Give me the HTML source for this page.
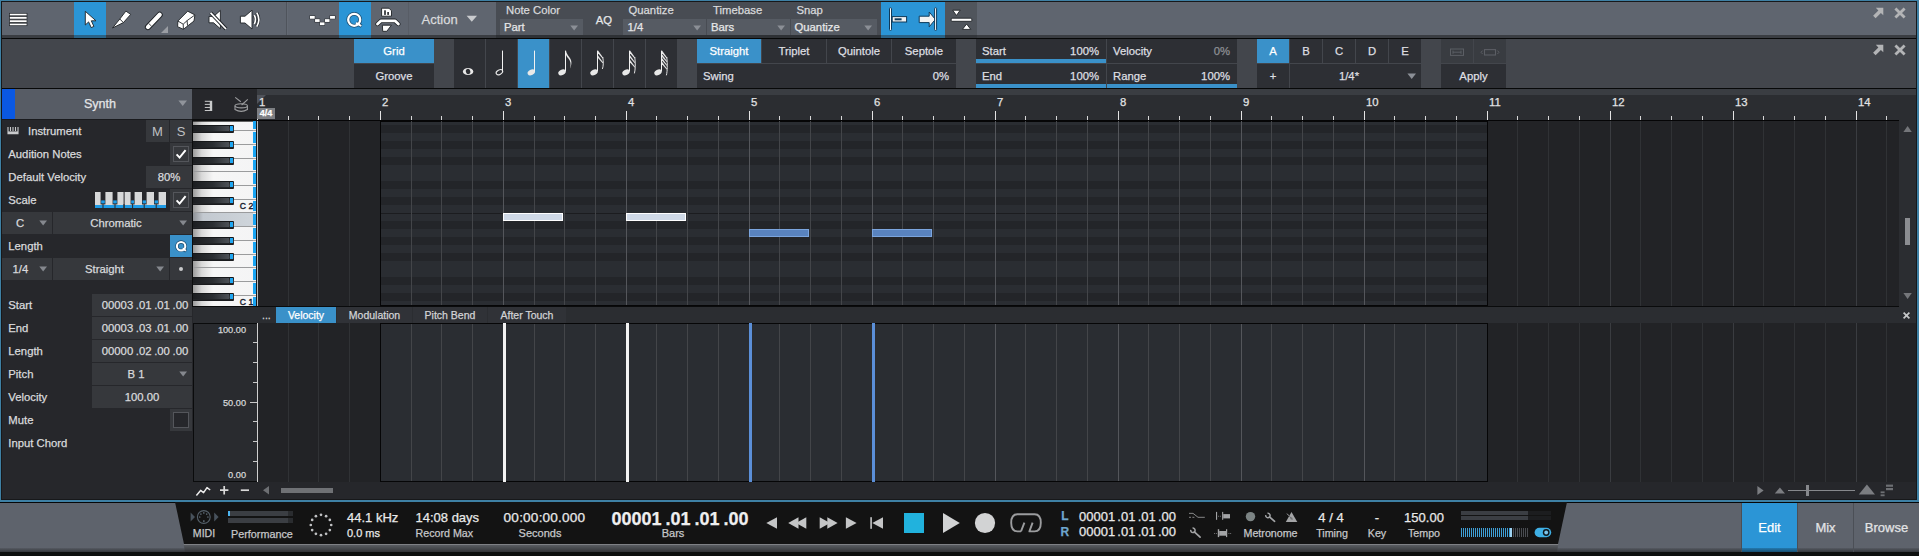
<!DOCTYPE html>
<html><head><meta charset="utf-8"><title>Studio One Editor</title>
<style>
html,body{margin:0;padding:0;background:#111;}
body{width:1919px;height:556px;overflow:hidden;position:relative;font-family:"Liberation Sans",sans-serif;}
#root{position:absolute;left:0;top:0;width:1919px;height:556px;overflow:hidden;background:#0e100f;}
#root div,#root svg{position:absolute;box-sizing:border-box;}
.t{white-space:nowrap;-webkit-text-stroke:0.25px currentColor;}
</style></head><body><div id="root">
<div style="left:0px;top:0px;width:1919px;height:502px;background:#3e80a4;"></div>
<div style="left:1px;top:1px;width:1916px;height:499px;background:#17181a;"></div>
<div style="left:2px;top:2px;width:1914px;height:33px;background:#5f656f;"></div>
<div style="left:2px;top:35px;width:1914px;height:3px;background:#3a3d42;"></div>
<div style="left:2px;top:38px;width:1914px;height:1px;background:#070808;"></div>
<div style="left:496px;top:2px;width:481px;height:33px;background:#484c53;"></div>
<div style="left:496px;top:35px;width:481px;height:3px;background:#2e3135;"></div>
<div style="left:286px;top:2px;width:1px;height:33px;background:#4f545c;"></div>
<div style="left:287px;top:2px;width:1px;height:33px;background:#646a74;"></div>
<div style="left:408px;top:2px;width:1px;height:33px;background:#585d66;"></div>
<div style="left:74px;top:2px;width:32px;height:33px;background:#2b95d6;"></div>
<div style="left:74px;top:35px;width:32px;height:3px;background:#2a6387;"></div>
<div style="left:339px;top:2px;width:32px;height:33px;background:#2b95d6;"></div>
<div style="left:339px;top:35px;width:32px;height:3px;background:#2a6387;"></div>
<div style="left:881px;top:2px;width:64px;height:33px;background:#2b95d6;"></div>
<div style="left:881px;top:35px;width:64px;height:3px;background:#2a6387;"></div>
<div style="left:945px;top:2px;width:32px;height:33px;background:#50555c;"></div>
<div style="left:945px;top:35px;width:32px;height:3px;background:#33363b;"></div>
<svg style="left:8px;top:11px;" width="22" height="17" viewBox="0 0 22 17"><rect x="1.5" y="2.3" width="17.5" height="2.5" fill="#fff" stroke="#24272b" stroke-width="0.7"/><rect x="1.5" y="5.6" width="17.5" height="2.5" fill="#fff" stroke="#24272b" stroke-width="0.7"/><rect x="1.5" y="8.899999999999999" width="17.5" height="2.5" fill="#fff" stroke="#24272b" stroke-width="0.7"/><rect x="1.5" y="12.2" width="17.5" height="2.5" fill="#fff" stroke="#24272b" stroke-width="0.7"/></svg>
<svg style="left:74px;top:2px;" width="32" height="35" viewBox="0 0 32 35"><path d="M11.3 9.3 L11.3 23 L14.6 19.9 L17.2 25.6 L19.9 24.4 L17.3 18.8 L22 18.8 Z" fill="#fff" stroke="#1e2226" stroke-width="0.9" stroke-linejoin="round"/></svg>
<svg style="left:106px;top:2px;" width="32" height="35" viewBox="0 0 32 35"><path d="M6.5 26 L13.8 17 L19.9 9.1 L24.7 12.4 L17.4 20.6 Z" fill="#fff" stroke="#1e2226" stroke-width="0.9" stroke-linejoin="round"/><path d="M13.8 17 L17.4 20.6" stroke="#1e2226" stroke-width="0.9"/></svg>
<svg style="left:138px;top:2px;" width="32" height="35" viewBox="0 0 32 35"><path d="M9.9 25.1 L21.7 12.8" stroke="#1e2226" stroke-width="6" stroke-linecap="round"/><path d="M9.9 25.1 L21.7 12.8" stroke="#fff" stroke-width="4.2" stroke-linecap="round"/><path d="M10.6 21.4 L13.6 24.2" stroke="#1e2226" stroke-width="0.8"/><path d="M30 24 L30 31 L23 31 Z" fill="#9a9da3"/></svg>
<svg style="left:170px;top:2px;" width="32" height="35" viewBox="0 0 32 35"><path d="M17.7 9.2 L24.9 12.9 L24 19 L13.4 27.3 L7.6 24.7 L7.9 19 Z" fill="#fff" stroke="#1e2226" stroke-width="0.9" stroke-linejoin="round"/><path d="M7.9 19 L13.2 22.2 L17.1 18.6 L24.6 13.2 M17.1 18.6 L17.5 23.6 M13.2 22.2 L13.4 27" fill="none" stroke="#1e2226" stroke-width="0.9"/></svg>
<svg style="left:202px;top:2px;" width="32" height="35" viewBox="0 0 32 35"><path d="M7 14.4 L11.6 14.4 L18.4 8.4 L18.4 26.8 L11.6 20.8 L7 20.8 Z" fill="#fff" stroke="#1e2226" stroke-width="0.9" stroke-linejoin="round"/><path d="M8.6 10.8 L24 27" stroke="#1e2226" stroke-width="3.6"/><path d="M8.6 10.8 L24 27" stroke="#fff" stroke-width="1.8"/></svg>
<svg style="left:234px;top:2px;" width="32" height="35" viewBox="0 0 32 35"><path d="M6.4 14.2 L11 14.2 L18 8.2 L18 27 L11 21 L6.4 21 Z" fill="#fff" stroke="#1e2226" stroke-width="0.9" stroke-linejoin="round"/><path d="M20.3 13.2 Q22.6 17.6 20.3 22" fill="none" stroke="#1e2226" stroke-width="3"/><path d="M22.8 10.6 Q26.8 17.6 22.8 24.6" fill="none" stroke="#1e2226" stroke-width="3"/><path d="M20.3 13.2 Q22.6 17.6 20.3 22" fill="none" stroke="#fff" stroke-width="1.7"/><path d="M22.8 10.6 Q26.8 17.6 22.8 24.6" fill="none" stroke="#fff" stroke-width="1.7"/></svg>
<svg style="left:308px;top:14px;" width="30" height="14" viewBox="0 0 30 14"><rect x="1.5" y="1.5" width="5.7" height="3.7" fill="#1e2226"/><rect x="6.6" y="4.7" width="5.5" height="3.7" fill="#1e2226"/><rect x="11.5" y="7.9" width="5.5" height="3.7" fill="#1e2226"/><rect x="16.5" y="4.7" width="5.5" height="3.7" fill="#1e2226"/><rect x="21.6" y="1.5" width="5.8" height="3.7" fill="#1e2226"/><rect x="1.95" y="1.95" width="4.8" height="2.8" fill="#fff"/><rect x="7.05" y="5.15" width="4.6" height="2.8" fill="#fff"/><rect x="11.95" y="8.35" width="4.6" height="2.8" fill="#fff"/><rect x="16.95" y="5.15" width="4.6" height="2.8" fill="#fff"/><rect x="22.05" y="1.95" width="4.8999999999999995" height="2.8" fill="#fff"/></svg>
<svg style="left:339px;top:2px;" width="32" height="35" viewBox="0 0 32 35"><circle cx="15.2" cy="17.8" r="6" fill="none" stroke="#1b4d70" stroke-width="3.7"/><path d="M17.1 20.8 L22.6 24.2" stroke="#1b4d70" stroke-width="3.4"/><circle cx="15.2" cy="17.8" r="6" fill="none" stroke="#fff" stroke-width="2.3"/><path d="M17.1 20.8 L22.2 24" stroke="#fff" stroke-width="2"/></svg>
<svg style="left:371px;top:2px;" width="34" height="35" viewBox="0 0 34 35"><path d="M10.6 6.2 L18 6.2 L20.5 8.8 L20.5 14.2 L10.6 14.2 Z" fill="#fff" stroke="#1e2226" stroke-width="0.9" stroke-linejoin="round"/><rect x="13.2" y="8.3" width="1.6" height="4.6" fill="#1e2226"/><rect x="16.3" y="10" width="1.6" height="2.9" fill="#1e2226"/><path d="M6.5 22 L10 18.8 L24 18.8 L27.4 22" fill="none" stroke="#1e2226" stroke-width="4.4" stroke-linejoin="round" stroke-linecap="round"/><path d="M6.5 22 L10 18.8 L24 18.8 L27.4 22" fill="none" stroke="#fff" stroke-width="2.8" stroke-linejoin="round" stroke-linecap="round"/><path d="M11.4 23.2 L20.4 23.2 L15.8 29.3 L11.7 29.3 Z" fill="#fff" stroke="#1e2226" stroke-width="0.9" stroke-linejoin="round"/></svg>
<div class="t" style="left:421.5px;top:11px;line-height:17px;height:17px;font-size:13px;color:#d9dadc;">Action</div>
<svg style="left:466px;top:15px;" width="12" height="8" viewBox="0 0 12 8"><path d="M0.6 0.8 L11 0.8 L5.8 6.8 Z" fill="#c9cbce"/></svg>
<div style="left:500px;top:19px;width:83px;height:16px;background:#565b63;"></div>
<div class="t" style="left:506px;top:3px;line-height:14px;height:14px;font-size:11.3px;color:#d9dadc;">Note Color</div>
<div class="t" style="left:504px;top:20px;line-height:14px;height:14px;font-size:11.3px;color:#e6e7e8;">Part</div>
<svg style="left:570px;top:24.5px;" width="9" height="6" viewBox="0 0 9 6"><path d="M0.3 0.5 L8 0.5 L4.15 5.4 Z" fill="#8b8f96"/></svg>
<div style="left:623px;top:19px;width:83px;height:16px;background:#565b63;"></div>
<div class="t" style="left:628.5px;top:3px;line-height:14px;height:14px;font-size:11.3px;color:#d9dadc;">Quantize</div>
<div class="t" style="left:627.5px;top:20px;line-height:14px;height:14px;font-size:11.3px;color:#e6e7e8;">1/4</div>
<svg style="left:692.8px;top:24.5px;" width="9" height="6" viewBox="0 0 9 6"><path d="M0.3 0.5 L8 0.5 L4.15 5.4 Z" fill="#8b8f96"/></svg>
<div style="left:707px;top:19px;width:83px;height:16px;background:#565b63;"></div>
<div class="t" style="left:713px;top:3px;line-height:14px;height:14px;font-size:11.3px;color:#d9dadc;">Timebase</div>
<div class="t" style="left:711px;top:20px;line-height:14px;height:14px;font-size:11.3px;color:#e6e7e8;">Bars</div>
<svg style="left:777px;top:24.5px;" width="9" height="6" viewBox="0 0 9 6"><path d="M0.3 0.5 L8 0.5 L4.15 5.4 Z" fill="#8b8f96"/></svg>
<div style="left:791px;top:19px;width:86px;height:16px;background:#565b63;"></div>
<div class="t" style="left:796.5px;top:3px;line-height:14px;height:14px;font-size:11.3px;color:#d9dadc;">Snap</div>
<div class="t" style="left:794.5px;top:20px;line-height:14px;height:14px;font-size:11.3px;color:#e6e7e8;">Quantize</div>
<svg style="left:864px;top:24.5px;" width="9" height="6" viewBox="0 0 9 6"><path d="M0.3 0.5 L8 0.5 L4.15 5.4 Z" fill="#8b8f96"/></svg>
<div class="t" style="left:595px;top:13px;line-height:14px;height:14px;font-size:11.3px;color:#e6e7e8;width:18px;text-align:center;">AQ</div>
<svg style="left:881px;top:2px;" width="64" height="35" viewBox="0 0 64 35"><rect x="8.5" y="5.8" width="2" height="22.6" rx="0.8" fill="#fff" stroke="#0f3a5a" stroke-width="1"/><rect x="11.2" y="14.6" width="14.4" height="5.4" fill="#f2f2f2" stroke="#0f3a5a" stroke-width="1"/><rect x="13.6" y="16.3" width="7" height="2" fill="#0f3a5a"/><path d="M38.2 14.2 L48.2 14.2 L48.2 10 L54.4 17.4 L48.2 24.8 L48.2 20.6 L38.2 20.6 Z" fill="#f2f2f2" stroke="#0f3a5a" stroke-width="1"/><rect x="53.6" y="5.8" width="2" height="22.6" rx="0.8" fill="#fff" stroke="#0f3a5a" stroke-width="1"/></svg>
<svg style="left:945px;top:2px;" width="32" height="35" viewBox="0 0 32 35"><rect x="6.2" y="16.2" width="20.6" height="3.1" rx="0.8" fill="#fff" stroke="#1e2226" stroke-width="0.9" stroke-linejoin="round"/><path d="M7.7 8.2 L15.2 8.2 L11.45 13.5 Z" fill="#fff" stroke="#1e2226" stroke-width="0.9" stroke-linejoin="round"/><path d="M17.4 27.4 L25.8 27.4 L21.6 22 Z" fill="#fff" stroke="#1e2226" stroke-width="0.9" stroke-linejoin="round"/></svg>
<svg style="left:1872px;top:6px;" width="14" height="14" viewBox="0 0 14 14"><path d="M3.8 1.8 L11.3 1.8 L11.3 9.3 L8.9 6.9 L3.6 12.2 L1.1 9.7 L6.4 4.4 Z" fill="#b3b4b6"/></svg>
<svg style="left:1893px;top:6px;" width="14" height="14" viewBox="0 0 14 14"><path d="M2.4 2.4 L11.6 11.6 M11.6 2.4 L2.4 11.6" stroke="#b3b4b6" stroke-width="2.8"/></svg>
<div style="left:2px;top:39px;width:1914px;height:49px;background:#43464c;"></div>
<div style="left:2px;top:88px;width:1914px;height:1px;background:#070808;"></div>
<div style="left:354px;top:39px;width:80px;height:24px;background:#3a91c9;"></div>
<div class="t" style="left:354px;top:44px;line-height:14px;height:14px;font-size:11.3px;color:#fff;width:80px;text-align:center;">Grid</div>
<div style="left:354px;top:64px;width:80px;height:24px;background:#2d2f34;"></div>
<div class="t" style="left:354px;top:69px;line-height:14px;height:14px;font-size:11.3px;color:#dedfe1;width:80px;text-align:center;">Groove</div>
<div style="left:454px;top:39px;width:31px;height:49px;background:#2d2f34;"></div>
<svg style="left:454px;top:39px;" width="31" height="49" viewBox="0 0 31 49"><ellipse cx="14.1" cy="32.5" rx="5.2" ry="3.6" fill="#e8e8e8"/><ellipse cx="14.1" cy="32.5" rx="2.2" ry="2.7" transform="rotate(-18 14.1 32.5)" fill="#2d2f34"/></svg>
<div style="left:486px;top:39px;width:31px;height:49px;background:#2d2f34;"></div>
<svg style="left:486px;top:39px;" width="31" height="49" viewBox="0 0 31 49"><ellipse cx="13.4" cy="33.2" rx="3.5" ry="2.2" transform="rotate(-28 13.4 33.2)" fill="none" stroke="#e8e8e8" stroke-width="1.1"/><rect x="16" y="11.6" width="1" height="20.6" fill="#f2f2f2"/></svg>
<div style="left:518px;top:39px;width:31px;height:49px;background:#3a91c9;"></div>
<svg style="left:518px;top:39px;" width="31" height="49" viewBox="0 0 31 49"><ellipse cx="13.3" cy="33.4" rx="3.9" ry="2.7" transform="rotate(-28 13.3 33.4)" fill="#e8e8e8"/><rect x="16" y="11.6" width="1" height="20.799999999999997" fill="#f2f2f2"/></svg>
<div style="left:550px;top:39px;width:31px;height:49px;background:#2d2f34;"></div>
<svg style="left:550px;top:39px;" width="31" height="49" viewBox="0 0 31 49"><ellipse cx="12" cy="33.4" rx="3.9" ry="2.7" transform="rotate(-28 12 33.4)" fill="#e8e8e8"/><rect x="15" y="11.6" width="1" height="20.799999999999997" fill="#f2f2f2"/><path d="M16 11.6 C16.6 16.8 21.2 18.6 21.4 23.2 C21.5 25.6 20.8 27.6 20 29.6 C20.4 27.2 20.8 25.2 20.4 23.4 C19.8 20.2 17.2 19.0 16 16.0 Z" fill="#e8e8e8"/></svg>
<div style="left:582px;top:39px;width:31px;height:49px;background:#2d2f34;"></div>
<svg style="left:582px;top:39px;" width="31" height="49" viewBox="0 0 31 49"><ellipse cx="12" cy="33.4" rx="3.9" ry="2.7" transform="rotate(-28 12 33.4)" fill="#e8e8e8"/><rect x="15" y="11.6" width="1" height="20.799999999999997" fill="#f2f2f2"/><path d="M16 11.6 L21.2 18.8 L20.6 19.4 L16 14.2 Z" fill="#e8e8e8"/><path d="M16 16.4 L21.2 23.599999999999998 L20.6 24.2 L16 19.0 Z" fill="#e8e8e8"/><path d="M20.8 18.0 C21.6 23.4 21.4 27.0 20.4 30.0" fill="none" stroke="#e8e8e8" stroke-width="0.95"/></svg>
<div style="left:614px;top:39px;width:31px;height:49px;background:#2d2f34;"></div>
<svg style="left:614px;top:39px;" width="31" height="49" viewBox="0 0 31 49"><ellipse cx="12" cy="33.4" rx="3.9" ry="2.7" transform="rotate(-28 12 33.4)" fill="#e8e8e8"/><rect x="15" y="11.6" width="1" height="20.799999999999997" fill="#f2f2f2"/><path d="M16 11.6 L21.2 18.8 L20.6 19.4 L16 14.2 Z" fill="#e8e8e8"/><path d="M16 16.2 L21.2 23.4 L20.6 24.0 L16 18.8 Z" fill="#e8e8e8"/><path d="M16 20.799999999999997 L21.2 27.999999999999996 L20.6 28.599999999999998 L16 23.4 Z" fill="#e8e8e8"/><path d="M20.8 18.0 C21.6 25.38 21.4 30.299999999999997 20.4 34.4" fill="none" stroke="#e8e8e8" stroke-width="0.95"/></svg>
<div style="left:646px;top:39px;width:31px;height:49px;background:#2d2f34;"></div>
<svg style="left:646px;top:39px;" width="31" height="49" viewBox="0 0 31 49"><ellipse cx="12" cy="33.4" rx="3.9" ry="2.7" transform="rotate(-28 12 33.4)" fill="#e8e8e8"/><rect x="15" y="11.6" width="1" height="20.799999999999997" fill="#f2f2f2"/><path d="M16 11.6 L21.2 18.8 L20.6 19.4 L16 14.2 Z" fill="#e8e8e8"/><path d="M16 15.3 L21.2 22.5 L20.6 23.1 L16 17.900000000000002 Z" fill="#e8e8e8"/><path d="M16 19.0 L21.2 26.2 L20.6 26.8 L16 21.6 Z" fill="#e8e8e8"/><path d="M16 22.700000000000003 L21.2 29.900000000000002 L20.6 30.500000000000004 L16 25.300000000000004 Z" fill="#e8e8e8"/><path d="M20.8 18.0 C21.6 26.235000000000003 21.4 31.725 20.4 36.300000000000004" fill="none" stroke="#e8e8e8" stroke-width="0.95"/></svg>
<div style="left:697px;top:39px;width:64px;height:24px;background:#3a91c9;"></div>
<div class="t" style="left:697px;top:44px;line-height:14px;height:14px;font-size:11.3px;color:#fff;width:64px;text-align:center;">Straight</div>
<div style="left:762px;top:39px;width:64px;height:24px;background:#2d2f34;"></div>
<div class="t" style="left:762px;top:44px;line-height:14px;height:14px;font-size:11.3px;color:#dedfe1;width:64px;text-align:center;">Triplet</div>
<div style="left:827px;top:39px;width:64px;height:24px;background:#2d2f34;"></div>
<div class="t" style="left:827px;top:44px;line-height:14px;height:14px;font-size:11.3px;color:#dedfe1;width:64px;text-align:center;">Quintole</div>
<div style="left:892px;top:39px;width:64px;height:24px;background:#2d2f34;"></div>
<div class="t" style="left:892px;top:44px;line-height:14px;height:14px;font-size:11.3px;color:#dedfe1;width:64px;text-align:center;">Septole</div>
<div style="left:697px;top:64px;width:259px;height:24px;background:#2d2f34;"></div>
<div class="t" style="left:703px;top:69px;line-height:14px;height:14px;font-size:11.3px;color:#dedfe1;">Swing</div>
<div class="t" style="left:880px;top:69px;line-height:14px;height:14px;font-size:11.3px;color:#dedfe1;width:69px;text-align:right;">0%</div>
<div style="left:976px;top:39px;width:130px;height:24px;background:#2d2f34;"></div>
<div style="left:976px;top:59px;width:130px;height:4px;background:#3a91c9;"></div>
<div class="t" style="left:982px;top:44px;line-height:14px;height:14px;font-size:11.3px;color:#dedfe1;">Start</div>
<div class="t" style="left:1026px;top:44px;line-height:14px;height:14px;font-size:11.3px;color:#dedfe1;width:73px;text-align:right;">100%</div>
<div style="left:976px;top:64px;width:130px;height:24px;background:#2d2f34;"></div>
<div style="left:976px;top:84px;width:130px;height:4px;background:#3a91c9;"></div>
<div class="t" style="left:982px;top:69px;line-height:14px;height:14px;font-size:11.3px;color:#dedfe1;">End</div>
<div class="t" style="left:1026px;top:69px;line-height:14px;height:14px;font-size:11.3px;color:#dedfe1;width:73px;text-align:right;">100%</div>
<div style="left:1107px;top:39px;width:130px;height:24px;background:#2d2f34;"></div>
<div class="t" style="left:1113px;top:44px;line-height:14px;height:14px;font-size:11.3px;color:#dedfe1;">Velocity</div>
<div class="t" style="left:1157px;top:44px;line-height:14px;height:14px;font-size:11.3px;color:#8e9095;width:73px;text-align:right;">0%</div>
<div style="left:1107px;top:64px;width:130px;height:24px;background:#2d2f34;"></div>
<div style="left:1107px;top:84px;width:130px;height:4px;background:#3a91c9;"></div>
<div class="t" style="left:1113px;top:69px;line-height:14px;height:14px;font-size:11.3px;color:#dedfe1;">Range</div>
<div class="t" style="left:1157px;top:69px;line-height:14px;height:14px;font-size:11.3px;color:#dedfe1;width:73px;text-align:right;">100%</div>
<div style="left:1257px;top:39px;width:32px;height:24px;background:#3a91c9;"></div>
<div class="t" style="left:1257px;top:44px;line-height:14px;height:14px;font-size:11.3px;color:#fff;width:32px;text-align:center;">A</div>
<div style="left:1290px;top:39px;width:32px;height:24px;background:#2d2f34;"></div>
<div class="t" style="left:1290px;top:44px;line-height:14px;height:14px;font-size:11.3px;color:#dedfe1;width:32px;text-align:center;">B</div>
<div style="left:1323px;top:39px;width:32px;height:24px;background:#2d2f34;"></div>
<div class="t" style="left:1323px;top:44px;line-height:14px;height:14px;font-size:11.3px;color:#dedfe1;width:32px;text-align:center;">C</div>
<div style="left:1356px;top:39px;width:32px;height:24px;background:#2d2f34;"></div>
<div class="t" style="left:1356px;top:44px;line-height:14px;height:14px;font-size:11.3px;color:#dedfe1;width:32px;text-align:center;">D</div>
<div style="left:1389px;top:39px;width:32px;height:24px;background:#2d2f34;"></div>
<div class="t" style="left:1389px;top:44px;line-height:14px;height:14px;font-size:11.3px;color:#dedfe1;width:32px;text-align:center;">E</div>
<div style="left:1257px;top:64px;width:32px;height:24px;background:#2d2f34;"></div>
<div class="t" style="left:1257px;top:69px;line-height:14px;height:14px;font-size:11.3px;color:#dedfe1;width:32px;text-align:center;">+</div>
<div style="left:1290px;top:64px;width:131px;height:24px;background:#2d2f34;"></div>
<div class="t" style="left:1290px;top:69px;line-height:14px;height:14px;font-size:11.3px;color:#dedfe1;width:118px;text-align:center;">1/4*</div>
<svg style="left:1407px;top:73px;" width="10" height="7" viewBox="0 0 10 7"><path d="M0.4 0.6 L9 0.6 L4.7 6 Z" fill="#8b8f96"/></svg>
<div style="left:1441px;top:39px;width:32px;height:24px;background:#393c41;"></div>
<div style="left:1474px;top:39px;width:32px;height:24px;background:#393c41;"></div>
<svg style="left:1441px;top:40px;" width="32" height="24" viewBox="0 0 32 24"><rect x="9.5" y="9" width="13" height="6.4" fill="none" stroke="#5b5e64" stroke-width="1"/><path d="M12 12.2 L20 12.2 M12 10.6 L12 13.8 M20 10.6 L20 13.8" stroke="#5b5e64" stroke-width="1"/></svg>
<svg style="left:1474px;top:40px;" width="32" height="24" viewBox="0 0 32 24"><rect x="10.5" y="9.6" width="11" height="5.4" fill="none" stroke="#5b5e64" stroke-width="1.1"/><path d="M8.6 10.6 L7 12.3 L8.6 14 M23.4 10.6 L25 12.3 L23.4 14" fill="none" stroke="#5b5e64" stroke-width="1"/></svg>
<div style="left:1441px;top:64px;width:65px;height:24px;background:#2d2f34;"></div>
<div class="t" style="left:1441px;top:69px;line-height:14px;height:14px;font-size:11.3px;color:#dedfe1;width:65px;text-align:center;">Apply</div>
<svg style="left:1872px;top:43px;" width="14" height="14" viewBox="0 0 14 14"><path d="M3.8 1.8 L11.3 1.8 L11.3 9.3 L8.9 6.9 L3.6 12.2 L1.1 9.7 L6.4 4.4 Z" fill="#b3b4b6"/></svg>
<svg style="left:1893px;top:43px;" width="14" height="14" viewBox="0 0 14 14"><path d="M2.4 2.4 L11.6 11.6 M11.6 2.4 L2.4 11.6" stroke="#b3b4b6" stroke-width="2.8"/></svg>
<div style="left:2px;top:89px;width:191px;height:410px;background:#26272b;"></div>
<div style="left:2px;top:89px;width:13px;height:30px;background:#0a58e2;"></div>
<div style="left:15px;top:89px;width:177px;height:30px;background:#575c65;"></div>
<div class="t" style="left:15px;top:96px;line-height:16px;height:16px;font-size:12.6px;color:#e4e5e7;width:170px;text-align:center;">Synth</div>
<svg style="left:178px;top:100px;" width="10" height="7" viewBox="0 0 10 7"><path d="M0.4 0.6 L9 0.6 L4.7 6 Z" fill="#90949b"/></svg>
<div style="left:2px;top:119px;width:191px;height:1px;background:#1a1b1e;"></div>
<svg style="left:7px;top:126px;" width="12" height="9" viewBox="0 0 12 9"><path d="M1 1 L1 7.6 L11 7.6 L11 1 M3.5 1 L3.5 5 M6 1 L6 5 M8.5 1 L8.5 5" fill="none" stroke="#c9cacc" stroke-width="1.1"/><rect x="1" y="5.4" width="10" height="2.2" fill="#c9cacc"/></svg>
<div class="t" style="left:28px;top:124px;line-height:14px;height:14px;font-size:11.3px;color:#d9dadc;">Instrument</div>
<div style="left:146px;top:120px;width:23px;height:22px;background:#36383c;"></div>
<div class="t" style="left:146px;top:123px;line-height:17px;height:17px;font-size:13px;color:#bfc0c2;width:23px;text-align:center;-webkit-text-stroke:0;">M</div>
<div style="left:170px;top:120px;width:22px;height:22px;background:#36383c;"></div>
<div class="t" style="left:170px;top:123px;line-height:17px;height:17px;font-size:13px;color:#bfc0c2;width:22px;text-align:center;-webkit-text-stroke:0;">S</div>
<div class="t" style="left:8.3px;top:147px;line-height:14px;height:14px;font-size:11.3px;color:#d9dadc;">Audition Notes</div>
<div style="left:170px;top:143px;width:22px;height:22px;background:#36383c;"></div>
<div style="left:173px;top:146px;width:16px;height:16px;border:1px solid #54565b;"></div>
<svg style="left:173px;top:146px;" width="16" height="16" viewBox="0 0 16 16"><path d="M3.6 8.4 L6.6 11.6 L12.6 4.2" fill="none" stroke="#fff" stroke-width="2"/></svg>
<div class="t" style="left:8.3px;top:170px;line-height:14px;height:14px;font-size:11.3px;color:#d9dadc;">Default Velocity</div>
<div style="left:146px;top:166px;width:46px;height:22px;background:#36383c;"></div>
<div class="t" style="left:146px;top:170px;line-height:14px;height:14px;font-size:11.3px;color:#d9dadc;width:46px;text-align:center;">80%</div>
<div class="t" style="left:8.3px;top:193px;line-height:14px;height:14px;font-size:11.3px;color:#d9dadc;">Scale</div>
<div style="left:170px;top:189px;width:22px;height:22px;background:#36383c;"></div>
<div style="left:173px;top:192px;width:16px;height:16px;border:1px solid #54565b;"></div>
<svg style="left:173px;top:192px;" width="16" height="16" viewBox="0 0 16 16"><path d="M3.6 8.4 L6.6 11.6 L12.6 4.2" fill="none" stroke="#fff" stroke-width="2"/></svg>
<svg style="left:95px;top:192px;" width="71" height="16" viewBox="0 0 71 16"><rect x="0" y="0" width="71" height="16" fill="#d7d8d9"/><rect x="0" y="13" width="71" height="3" fill="#1e9be6"/><rect x="5.6" y="0" width="4.800000000000001" height="12.4" fill="#26272b"/><rect x="6.199999999999999" y="8.4" width="3.6000000000000005" height="3" fill="#1e9be6"/><rect x="17.6" y="0" width="4.799999999999997" height="12.4" fill="#26272b"/><rect x="18.200000000000003" y="8.4" width="3.599999999999997" height="3" fill="#1e9be6"/><rect x="35.6" y="0" width="4.0" height="12.4" fill="#26272b"/><rect x="36.2" y="8.4" width="2.8" height="3" fill="#1e9be6"/><rect x="47" y="0" width="4.600000000000001" height="12.4" fill="#26272b"/><rect x="47.6" y="8.4" width="3.4000000000000012" height="3" fill="#1e9be6"/><rect x="59" y="0" width="4.600000000000001" height="12.4" fill="#26272b"/><rect x="59.6" y="8.4" width="3.4000000000000012" height="3" fill="#1e9be6"/><rect x="7.5" y="12" width="1" height="4" fill="#26272b"/><rect x="19.5" y="12" width="1" height="4" fill="#26272b"/><rect x="28.5" y="12" width="1" height="4" fill="#26272b"/><rect x="37.1" y="12" width="1" height="4" fill="#26272b"/><rect x="48.7" y="12" width="1" height="4" fill="#26272b"/><rect x="60.7" y="12" width="1" height="4" fill="#26272b"/><rect x="28.6" y="0" width="1" height="16" fill="#26272b"/></svg>
<div style="left:2px;top:212px;width:50px;height:22px;background:#36383c;"></div>
<div class="t" style="left:13px;top:216px;line-height:14px;height:14px;font-size:11.3px;color:#d9dadc;width:14px;text-align:center;">C</div>
<svg style="left:38.5px;top:220px;" width="9" height="6" viewBox="0 0 9 6"><path d="M0.3 0.5 L8 0.5 L4.15 5.4 Z" fill="#85888e"/></svg>
<div style="left:53px;top:212px;width:139px;height:22px;background:#36383c;"></div>
<div class="t" style="left:53px;top:216px;line-height:14px;height:14px;font-size:11.3px;color:#d9dadc;width:126px;text-align:center;">Chromatic</div>
<svg style="left:178.5px;top:220px;" width="9" height="6" viewBox="0 0 9 6"><path d="M0.3 0.5 L8 0.5 L4.15 5.4 Z" fill="#85888e"/></svg>
<div class="t" style="left:8.3px;top:239px;line-height:14px;height:14px;font-size:11.3px;color:#d9dadc;">Length</div>
<div style="left:170px;top:235px;width:22px;height:22px;background:#3a91c9;"></div>
<svg style="left:170px;top:235px;" width="22" height="22" viewBox="0 0 22 22"><circle cx="11.1" cy="11.2" r="4.2" fill="none" stroke="#1b4d70" stroke-width="3.4"/><path d="M12.8 13.2 L16.2 16.2" stroke="#1b4d70" stroke-width="3.2"/><circle cx="11.1" cy="11.2" r="4.2" fill="none" stroke="#fff" stroke-width="2.1"/><path d="M12.8 13.2 L15.9 15.9" stroke="#fff" stroke-width="1.9"/></svg>
<div style="left:2px;top:258px;width:50px;height:22px;background:#36383c;"></div>
<div class="t" style="left:12.5px;top:262px;line-height:14px;height:14px;font-size:11.3px;color:#d9dadc;">1/4</div>
<svg style="left:38.5px;top:266px;" width="9" height="6" viewBox="0 0 9 6"><path d="M0.3 0.5 L8 0.5 L4.15 5.4 Z" fill="#85888e"/></svg>
<div style="left:53px;top:258px;width:116px;height:22px;background:#36383c;"></div>
<div class="t" style="left:53px;top:262px;line-height:14px;height:14px;font-size:11.3px;color:#d9dadc;width:103px;text-align:center;">Straight</div>
<svg style="left:155.5px;top:266px;" width="9" height="6" viewBox="0 0 9 6"><path d="M0.3 0.5 L8 0.5 L4.15 5.4 Z" fill="#85888e"/></svg>
<div style="left:170px;top:258px;width:22px;height:22px;background:#36383c;"></div>
<div style="left:179px;top:267px;width:4px;height:4px;background:#c9cacc;border-radius:2px;"></div>
<div class="t" style="left:8.3px;top:298px;line-height:14px;height:14px;font-size:11.3px;color:#d9dadc;">Start</div>
<div style="left:92px;top:294px;width:100px;height:22px;background:#36383c;"></div>
<div class="t" style="left:95px;top:298px;line-height:14px;height:14px;font-size:11.3px;color:#d9dadc;width:100px;text-align:center;word-spacing:-0.5px;">00003 .01 .01 .00</div>
<div class="t" style="left:8.3px;top:321px;line-height:14px;height:14px;font-size:11.3px;color:#d9dadc;">End</div>
<div style="left:92px;top:317px;width:100px;height:22px;background:#36383c;"></div>
<div class="t" style="left:95px;top:321px;line-height:14px;height:14px;font-size:11.3px;color:#d9dadc;width:100px;text-align:center;word-spacing:-0.5px;">00003 .03 .01 .00</div>
<div class="t" style="left:8.3px;top:344px;line-height:14px;height:14px;font-size:11.3px;color:#d9dadc;">Length</div>
<div style="left:92px;top:340px;width:100px;height:22px;background:#36383c;"></div>
<div class="t" style="left:95px;top:344px;line-height:14px;height:14px;font-size:11.3px;color:#d9dadc;width:100px;text-align:center;word-spacing:-0.5px;">00000 .02 .00 .00</div>
<div class="t" style="left:8.3px;top:367px;line-height:14px;height:14px;font-size:11.3px;color:#d9dadc;">Pitch</div>
<div style="left:92px;top:363px;width:100px;height:22px;background:#36383c;"></div>
<div class="t" style="left:92px;top:367px;line-height:14px;height:14px;font-size:11.3px;color:#d9dadc;width:88px;text-align:center;">B 1</div>
<svg style="left:178.5px;top:371px;" width="9" height="6" viewBox="0 0 9 6"><path d="M0.3 0.5 L8 0.5 L4.15 5.4 Z" fill="#85888e"/></svg>
<div class="t" style="left:8.3px;top:390px;line-height:14px;height:14px;font-size:11.3px;color:#d9dadc;">Velocity</div>
<div style="left:92px;top:386px;width:100px;height:22px;background:#36383c;"></div>
<div class="t" style="left:92px;top:390px;line-height:14px;height:14px;font-size:11.3px;color:#d9dadc;width:100px;text-align:center;">100.00</div>
<div class="t" style="left:8.3px;top:413px;line-height:14px;height:14px;font-size:11.3px;color:#d9dadc;">Mute</div>
<div style="left:170px;top:409px;width:22px;height:22px;background:#36383c;"></div>
<div style="left:173px;top:412px;width:16px;height:16px;background:#26272b;border:1px solid #54565b;"></div>
<div class="t" style="left:8.3px;top:436px;line-height:14px;height:14px;font-size:11.3px;color:#d9dadc;">Input Chord</div>
<div style="left:193px;top:89px;width:64px;height:30px;background:#26272b;"></div>
<svg style="left:203px;top:99px;" width="12" height="14" viewBox="0 0 12 14"><rect x="6.8" y="1.8" width="2.4" height="10.2" fill="#c9cacb"/><rect x="1.8" y="1.80" width="5.2" height="1" fill="#c9cacb"/><rect x="1.8" y="4.87" width="5.2" height="1" fill="#c9cacb"/><rect x="1.8" y="7.94" width="5.2" height="1" fill="#c9cacb"/><rect x="1.8" y="11.01" width="5.2" height="1" fill="#c9cacb"/></svg>
<svg style="left:231px;top:95px;" width="22" height="20" viewBox="0 0 22 20"><ellipse cx="10.2" cy="10.8" rx="6.2" ry="2.1" fill="none" stroke="#9b9c9e" stroke-width="1.1"/><path d="M4 10.8 L4 14.6 Q10.2 18.2 16.4 14.6 L16.4 10.8" fill="none" stroke="#9b9c9e" stroke-width="1.1"/><path d="M4.2 2.4 L9.8 6.8 M16.8 4.4 L10.6 10" stroke="#9b9c9e" stroke-width="1.1"/></svg>
<div style="left:257px;top:89px;width:1659px;height:31px;background:#2b2d31;"></div>
<div style="left:257px;top:89px;width:1659px;height:6px;background:#3a3d42;"></div>
<div style="left:193px;top:119px;width:64px;height:2px;background:#0c0d0e;"></div>
<div style="left:257px;top:120px;width:1642px;height:1px;background:#050506;"></div>
<svg style="left:257px;top:95px;" width="10" height="10" viewBox="0 0 10 10"><path d="M0 0 L9 0 L0 9 Z" fill="#50535a"/></svg>
<div style="left:257px;top:111px;width:1px;height:9px;background:#e4e4e4;"></div>
<div class="t" style="left:259px;top:95px;line-height:14px;height:14px;font-size:11.3px;color:#e2e3e4;">1</div>
<div style="left:380px;top:111px;width:1px;height:9px;background:#e4e4e4;"></div>
<div class="t" style="left:382px;top:95px;line-height:14px;height:14px;font-size:11.3px;color:#e2e3e4;">2</div>
<div style="left:503px;top:111px;width:1px;height:9px;background:#e4e4e4;"></div>
<div class="t" style="left:505px;top:95px;line-height:14px;height:14px;font-size:11.3px;color:#e2e3e4;">3</div>
<div style="left:626px;top:111px;width:1px;height:9px;background:#e4e4e4;"></div>
<div class="t" style="left:628px;top:95px;line-height:14px;height:14px;font-size:11.3px;color:#e2e3e4;">4</div>
<div style="left:749px;top:111px;width:1px;height:9px;background:#e4e4e4;"></div>
<div class="t" style="left:751px;top:95px;line-height:14px;height:14px;font-size:11.3px;color:#e2e3e4;">5</div>
<div style="left:872px;top:111px;width:1px;height:9px;background:#e4e4e4;"></div>
<div class="t" style="left:874px;top:95px;line-height:14px;height:14px;font-size:11.3px;color:#e2e3e4;">6</div>
<div style="left:995px;top:111px;width:1px;height:9px;background:#e4e4e4;"></div>
<div class="t" style="left:997px;top:95px;line-height:14px;height:14px;font-size:11.3px;color:#e2e3e4;">7</div>
<div style="left:1118px;top:111px;width:1px;height:9px;background:#e4e4e4;"></div>
<div class="t" style="left:1120px;top:95px;line-height:14px;height:14px;font-size:11.3px;color:#e2e3e4;">8</div>
<div style="left:1241px;top:111px;width:1px;height:9px;background:#e4e4e4;"></div>
<div class="t" style="left:1243px;top:95px;line-height:14px;height:14px;font-size:11.3px;color:#e2e3e4;">9</div>
<div style="left:1364px;top:111px;width:1px;height:9px;background:#e4e4e4;"></div>
<div class="t" style="left:1366px;top:95px;line-height:14px;height:14px;font-size:11.3px;color:#e2e3e4;">10</div>
<div style="left:1487px;top:111px;width:1px;height:9px;background:#e4e4e4;"></div>
<div class="t" style="left:1489px;top:95px;line-height:14px;height:14px;font-size:11.3px;color:#e2e3e4;">11</div>
<div style="left:1610px;top:111px;width:1px;height:9px;background:#e4e4e4;"></div>
<div class="t" style="left:1612px;top:95px;line-height:14px;height:14px;font-size:11.3px;color:#e2e3e4;">12</div>
<div style="left:1733px;top:111px;width:1px;height:9px;background:#e4e4e4;"></div>
<div class="t" style="left:1735px;top:95px;line-height:14px;height:14px;font-size:11.3px;color:#e2e3e4;">13</div>
<div style="left:1856px;top:111px;width:1px;height:9px;background:#e4e4e4;"></div>
<div class="t" style="left:1858px;top:95px;line-height:14px;height:14px;font-size:11.3px;color:#e2e3e4;">14</div>
<div style="left:288px;top:116px;width:1px;height:4px;background:#d8d8d8;"></div>
<div style="left:318px;top:116px;width:1px;height:4px;background:#d8d8d8;"></div>
<div style="left:349px;top:116px;width:1px;height:4px;background:#d8d8d8;"></div>
<div style="left:411px;top:116px;width:1px;height:4px;background:#d8d8d8;"></div>
<div style="left:441px;top:116px;width:1px;height:4px;background:#d8d8d8;"></div>
<div style="left:472px;top:116px;width:1px;height:4px;background:#d8d8d8;"></div>
<div style="left:534px;top:116px;width:1px;height:4px;background:#d8d8d8;"></div>
<div style="left:564px;top:116px;width:1px;height:4px;background:#d8d8d8;"></div>
<div style="left:595px;top:116px;width:1px;height:4px;background:#d8d8d8;"></div>
<div style="left:656px;top:116px;width:1px;height:4px;background:#d8d8d8;"></div>
<div style="left:687px;top:116px;width:1px;height:4px;background:#d8d8d8;"></div>
<div style="left:718px;top:116px;width:1px;height:4px;background:#d8d8d8;"></div>
<div style="left:779px;top:116px;width:1px;height:4px;background:#d8d8d8;"></div>
<div style="left:810px;top:116px;width:1px;height:4px;background:#d8d8d8;"></div>
<div style="left:841px;top:116px;width:1px;height:4px;background:#d8d8d8;"></div>
<div style="left:902px;top:116px;width:1px;height:4px;background:#d8d8d8;"></div>
<div style="left:933px;top:116px;width:1px;height:4px;background:#d8d8d8;"></div>
<div style="left:964px;top:116px;width:1px;height:4px;background:#d8d8d8;"></div>
<div style="left:1025px;top:116px;width:1px;height:4px;background:#d8d8d8;"></div>
<div style="left:1056px;top:116px;width:1px;height:4px;background:#d8d8d8;"></div>
<div style="left:1087px;top:116px;width:1px;height:4px;background:#d8d8d8;"></div>
<div style="left:1148px;top:116px;width:1px;height:4px;background:#d8d8d8;"></div>
<div style="left:1179px;top:116px;width:1px;height:4px;background:#d8d8d8;"></div>
<div style="left:1210px;top:116px;width:1px;height:4px;background:#d8d8d8;"></div>
<div style="left:1271px;top:116px;width:1px;height:4px;background:#d8d8d8;"></div>
<div style="left:1302px;top:116px;width:1px;height:4px;background:#d8d8d8;"></div>
<div style="left:1333px;top:116px;width:1px;height:4px;background:#d8d8d8;"></div>
<div style="left:1394px;top:116px;width:1px;height:4px;background:#d8d8d8;"></div>
<div style="left:1425px;top:116px;width:1px;height:4px;background:#d8d8d8;"></div>
<div style="left:1456px;top:116px;width:1px;height:4px;background:#d8d8d8;"></div>
<div style="left:1517px;top:116px;width:1px;height:4px;background:#d8d8d8;"></div>
<div style="left:1548px;top:116px;width:1px;height:4px;background:#d8d8d8;"></div>
<div style="left:1579px;top:116px;width:1px;height:4px;background:#d8d8d8;"></div>
<div style="left:1640px;top:116px;width:1px;height:4px;background:#d8d8d8;"></div>
<div style="left:1671px;top:116px;width:1px;height:4px;background:#d8d8d8;"></div>
<div style="left:1702px;top:116px;width:1px;height:4px;background:#d8d8d8;"></div>
<div style="left:1763px;top:116px;width:1px;height:4px;background:#d8d8d8;"></div>
<div style="left:1794px;top:116px;width:1px;height:4px;background:#d8d8d8;"></div>
<div style="left:1825px;top:116px;width:1px;height:4px;background:#d8d8d8;"></div>
<div style="left:1886px;top:116px;width:1px;height:4px;background:#d8d8d8;"></div>
<div style="left:257px;top:108px;width:18px;height:11px;background:#7d7f83;"></div>
<div class="t" style="left:257px;top:107px;line-height:12px;height:12px;font-size:9px;color:#fff;width:18px;text-align:center;font-weight:bold;">4/4</div>
<div style="left:257px;top:121px;width:1642px;height:185px;background:#222326;"></div>
<div style="left:1899px;top:119px;width:17px;height:188px;background:#2b2d31;"></div>
<div style="left:380px;top:121px;width:1107px;height:185px;background:#2a2d32;"></div>
<div style="left:380px;top:293px;width:1107px;height:8px;background:#232529;"></div>
<div style="left:380px;top:277px;width:1107px;height:8px;background:#232529;"></div>
<div style="left:380px;top:253px;width:1107px;height:8px;background:#232529;"></div>
<div style="left:380px;top:237px;width:1107px;height:8px;background:#232529;"></div>
<div style="left:380px;top:221px;width:1107px;height:8px;background:#232529;"></div>
<div style="left:380px;top:197px;width:1107px;height:8px;background:#232529;"></div>
<div style="left:380px;top:181px;width:1107px;height:8px;background:#232529;"></div>
<div style="left:380px;top:157px;width:1107px;height:8px;background:#232529;"></div>
<div style="left:380px;top:141px;width:1107px;height:8px;background:#232529;"></div>
<div style="left:380px;top:125px;width:1107px;height:8px;background:#232529;"></div>
<div style="left:380px;top:213px;width:1107px;height:1px;background:#1b1c1f;"></div>
<div style="left:380px;top:121px;width:1107px;height:1px;background:#060607;"></div>
<div style="left:257px;top:323px;width:1642px;height:159px;background:#222326;"></div>
<div style="left:1899px;top:323px;width:17px;height:159px;background:#222326;"></div>
<div style="left:380px;top:323px;width:1107px;height:159px;background:#2a2d32;"></div>
<div style="left:257px;top:121px;width:1px;height:185px;background:#3a3c40;"></div>
<div style="left:257px;top:323px;width:1px;height:159px;background:#3a3c40;"></div>
<div style="left:288px;top:121px;width:1px;height:185px;background:#303235;"></div>
<div style="left:288px;top:323px;width:1px;height:159px;background:#303235;"></div>
<div style="left:318px;top:121px;width:1px;height:185px;background:#303235;"></div>
<div style="left:318px;top:323px;width:1px;height:159px;background:#303235;"></div>
<div style="left:349px;top:121px;width:1px;height:185px;background:#303235;"></div>
<div style="left:349px;top:323px;width:1px;height:159px;background:#303235;"></div>
<div style="left:380px;top:121px;width:1px;height:185px;background:#3a3c40;"></div>
<div style="left:380px;top:323px;width:1px;height:159px;background:#3a3c40;"></div>
<div style="left:411px;top:121px;width:1px;height:185px;background:#434549;"></div>
<div style="left:411px;top:323px;width:1px;height:159px;background:#434549;"></div>
<div style="left:441px;top:121px;width:1px;height:185px;background:#434549;"></div>
<div style="left:441px;top:323px;width:1px;height:159px;background:#434549;"></div>
<div style="left:472px;top:121px;width:1px;height:185px;background:#434549;"></div>
<div style="left:472px;top:323px;width:1px;height:159px;background:#434549;"></div>
<div style="left:503px;top:121px;width:1px;height:185px;background:#54565b;"></div>
<div style="left:503px;top:323px;width:1px;height:159px;background:#54565b;"></div>
<div style="left:534px;top:121px;width:1px;height:185px;background:#434549;"></div>
<div style="left:534px;top:323px;width:1px;height:159px;background:#434549;"></div>
<div style="left:564px;top:121px;width:1px;height:185px;background:#434549;"></div>
<div style="left:564px;top:323px;width:1px;height:159px;background:#434549;"></div>
<div style="left:595px;top:121px;width:1px;height:185px;background:#434549;"></div>
<div style="left:595px;top:323px;width:1px;height:159px;background:#434549;"></div>
<div style="left:626px;top:121px;width:1px;height:185px;background:#54565b;"></div>
<div style="left:626px;top:323px;width:1px;height:159px;background:#54565b;"></div>
<div style="left:656px;top:121px;width:1px;height:185px;background:#434549;"></div>
<div style="left:656px;top:323px;width:1px;height:159px;background:#434549;"></div>
<div style="left:687px;top:121px;width:1px;height:185px;background:#434549;"></div>
<div style="left:687px;top:323px;width:1px;height:159px;background:#434549;"></div>
<div style="left:718px;top:121px;width:1px;height:185px;background:#434549;"></div>
<div style="left:718px;top:323px;width:1px;height:159px;background:#434549;"></div>
<div style="left:749px;top:121px;width:1px;height:185px;background:#54565b;"></div>
<div style="left:749px;top:323px;width:1px;height:159px;background:#54565b;"></div>
<div style="left:779px;top:121px;width:1px;height:185px;background:#434549;"></div>
<div style="left:779px;top:323px;width:1px;height:159px;background:#434549;"></div>
<div style="left:810px;top:121px;width:1px;height:185px;background:#434549;"></div>
<div style="left:810px;top:323px;width:1px;height:159px;background:#434549;"></div>
<div style="left:841px;top:121px;width:1px;height:185px;background:#434549;"></div>
<div style="left:841px;top:323px;width:1px;height:159px;background:#434549;"></div>
<div style="left:872px;top:121px;width:1px;height:185px;background:#54565b;"></div>
<div style="left:872px;top:323px;width:1px;height:159px;background:#54565b;"></div>
<div style="left:902px;top:121px;width:1px;height:185px;background:#434549;"></div>
<div style="left:902px;top:323px;width:1px;height:159px;background:#434549;"></div>
<div style="left:933px;top:121px;width:1px;height:185px;background:#434549;"></div>
<div style="left:933px;top:323px;width:1px;height:159px;background:#434549;"></div>
<div style="left:964px;top:121px;width:1px;height:185px;background:#434549;"></div>
<div style="left:964px;top:323px;width:1px;height:159px;background:#434549;"></div>
<div style="left:995px;top:121px;width:1px;height:185px;background:#54565b;"></div>
<div style="left:995px;top:323px;width:1px;height:159px;background:#54565b;"></div>
<div style="left:1025px;top:121px;width:1px;height:185px;background:#434549;"></div>
<div style="left:1025px;top:323px;width:1px;height:159px;background:#434549;"></div>
<div style="left:1056px;top:121px;width:1px;height:185px;background:#434549;"></div>
<div style="left:1056px;top:323px;width:1px;height:159px;background:#434549;"></div>
<div style="left:1087px;top:121px;width:1px;height:185px;background:#434549;"></div>
<div style="left:1087px;top:323px;width:1px;height:159px;background:#434549;"></div>
<div style="left:1118px;top:121px;width:1px;height:185px;background:#54565b;"></div>
<div style="left:1118px;top:323px;width:1px;height:159px;background:#54565b;"></div>
<div style="left:1148px;top:121px;width:1px;height:185px;background:#434549;"></div>
<div style="left:1148px;top:323px;width:1px;height:159px;background:#434549;"></div>
<div style="left:1179px;top:121px;width:1px;height:185px;background:#434549;"></div>
<div style="left:1179px;top:323px;width:1px;height:159px;background:#434549;"></div>
<div style="left:1210px;top:121px;width:1px;height:185px;background:#434549;"></div>
<div style="left:1210px;top:323px;width:1px;height:159px;background:#434549;"></div>
<div style="left:1241px;top:121px;width:1px;height:185px;background:#54565b;"></div>
<div style="left:1241px;top:323px;width:1px;height:159px;background:#54565b;"></div>
<div style="left:1271px;top:121px;width:1px;height:185px;background:#434549;"></div>
<div style="left:1271px;top:323px;width:1px;height:159px;background:#434549;"></div>
<div style="left:1302px;top:121px;width:1px;height:185px;background:#434549;"></div>
<div style="left:1302px;top:323px;width:1px;height:159px;background:#434549;"></div>
<div style="left:1333px;top:121px;width:1px;height:185px;background:#434549;"></div>
<div style="left:1333px;top:323px;width:1px;height:159px;background:#434549;"></div>
<div style="left:1364px;top:121px;width:1px;height:185px;background:#54565b;"></div>
<div style="left:1364px;top:323px;width:1px;height:159px;background:#54565b;"></div>
<div style="left:1394px;top:121px;width:1px;height:185px;background:#434549;"></div>
<div style="left:1394px;top:323px;width:1px;height:159px;background:#434549;"></div>
<div style="left:1425px;top:121px;width:1px;height:185px;background:#434549;"></div>
<div style="left:1425px;top:323px;width:1px;height:159px;background:#434549;"></div>
<div style="left:1456px;top:121px;width:1px;height:185px;background:#434549;"></div>
<div style="left:1456px;top:323px;width:1px;height:159px;background:#434549;"></div>
<div style="left:1487px;top:121px;width:1px;height:185px;background:#3a3c40;"></div>
<div style="left:1487px;top:323px;width:1px;height:159px;background:#3a3c40;"></div>
<div style="left:1517px;top:121px;width:1px;height:185px;background:#303235;"></div>
<div style="left:1517px;top:323px;width:1px;height:159px;background:#303235;"></div>
<div style="left:1548px;top:121px;width:1px;height:185px;background:#303235;"></div>
<div style="left:1548px;top:323px;width:1px;height:159px;background:#303235;"></div>
<div style="left:1579px;top:121px;width:1px;height:185px;background:#303235;"></div>
<div style="left:1579px;top:323px;width:1px;height:159px;background:#303235;"></div>
<div style="left:1610px;top:121px;width:1px;height:185px;background:#3a3c40;"></div>
<div style="left:1610px;top:323px;width:1px;height:159px;background:#3a3c40;"></div>
<div style="left:1640px;top:121px;width:1px;height:185px;background:#303235;"></div>
<div style="left:1640px;top:323px;width:1px;height:159px;background:#303235;"></div>
<div style="left:1671px;top:121px;width:1px;height:185px;background:#303235;"></div>
<div style="left:1671px;top:323px;width:1px;height:159px;background:#303235;"></div>
<div style="left:1702px;top:121px;width:1px;height:185px;background:#303235;"></div>
<div style="left:1702px;top:323px;width:1px;height:159px;background:#303235;"></div>
<div style="left:1733px;top:121px;width:1px;height:185px;background:#3a3c40;"></div>
<div style="left:1733px;top:323px;width:1px;height:159px;background:#3a3c40;"></div>
<div style="left:1763px;top:121px;width:1px;height:185px;background:#303235;"></div>
<div style="left:1763px;top:323px;width:1px;height:159px;background:#303235;"></div>
<div style="left:1794px;top:121px;width:1px;height:185px;background:#303235;"></div>
<div style="left:1794px;top:323px;width:1px;height:159px;background:#303235;"></div>
<div style="left:1825px;top:121px;width:1px;height:185px;background:#303235;"></div>
<div style="left:1825px;top:323px;width:1px;height:159px;background:#303235;"></div>
<div style="left:1856px;top:121px;width:1px;height:185px;background:#3a3c40;"></div>
<div style="left:1856px;top:323px;width:1px;height:159px;background:#3a3c40;"></div>
<div style="left:1886px;top:121px;width:1px;height:185px;background:#303235;"></div>
<div style="left:1886px;top:323px;width:1px;height:159px;background:#303235;"></div>
<div style="left:380px;top:121px;width:1px;height:185px;background:#060607;"></div>
<div style="left:1487px;top:121px;width:1px;height:185px;background:#060607;"></div>
<div style="left:380px;top:305px;width:1108px;height:1px;background:#060607;"></div>
<div style="left:503px;top:213px;width:60px;height:8px;background:#cfd9e7;border:1px solid #ffffff;"></div>
<div style="left:626px;top:213px;width:60px;height:8px;background:#cfd9e7;border:1px solid #ffffff;"></div>
<div style="left:749px;top:229px;width:60px;height:8px;background:#5983bf;border:1px solid #7ba5de;"></div>
<div style="left:872px;top:229px;width:60px;height:8px;background:#5983bf;border:1px solid #7ba5de;"></div>
<svg style="left:1901px;top:125px;" width="13" height="8" viewBox="0 0 13 8"><path d="M2.4 6.9 L10.8 6.9 L6.6 1.1 Z" fill="#74767a"/></svg>
<svg style="left:1901px;top:292px;" width="13" height="8" viewBox="0 0 13 8"><path d="M2.4 1.1 L10.8 1.1 L6.6 6.9 Z" fill="#74767a"/></svg>
<div style="left:1905px;top:218px;width:5px;height:27px;background:#8b8d91;"></div>
<div style="left:193px;top:121px;width:63px;height:185px;background:linear-gradient(90deg,#9b9b9b 0%,#d9d9d9 14%,#f6f6f6 32%,#f4f4f5 100%);"></div>
<div style="left:193px;top:121px;width:64px;height:1px;background:rgba(0,0,0,0.6);"></div>
<div style="left:193px;top:213px;width:63px;height:13px;background:linear-gradient(90deg,#8e9196 0%,#c3c9d0 16%,#cfd5db 100%);"></div>
<div style="left:193px;top:212px;width:60px;height:1px;background:#9a9b9d;"></div>
<div style="left:193px;top:130px;width:60px;height:1px;background:#9a9b9d;"></div>
<div style="left:193px;top:144px;width:60px;height:1px;background:#9a9b9d;"></div>
<div style="left:193px;top:158px;width:60px;height:1px;background:#9a9b9d;"></div>
<div style="left:193px;top:171px;width:60px;height:1px;background:#9a9b9d;"></div>
<div style="left:193px;top:185px;width:60px;height:1px;background:#9a9b9d;"></div>
<div style="left:193px;top:199px;width:60px;height:1px;background:#9a9b9d;"></div>
<div style="left:193px;top:226px;width:60px;height:1px;background:#9a9b9d;"></div>
<div style="left:193px;top:240px;width:60px;height:1px;background:#9a9b9d;"></div>
<div style="left:193px;top:254px;width:60px;height:1px;background:#9a9b9d;"></div>
<div style="left:193px;top:267px;width:60px;height:1px;background:#9a9b9d;"></div>
<div style="left:193px;top:281px;width:60px;height:1px;background:#9a9b9d;"></div>
<div style="left:193px;top:295px;width:60px;height:1px;background:#9a9b9d;"></div>
<div style="left:253px;top:121px;width:3px;height:185px;background:#19a4f2;"></div>
<div style="left:253px;top:211px;width:3px;height:3px;background:#efeff0;"></div>
<div style="left:253px;top:212px;width:3px;height:1px;background:#a9aaac;"></div>
<div style="left:253px;top:129px;width:3px;height:3px;background:#efeff0;"></div>
<div style="left:253px;top:130px;width:3px;height:1px;background:#a9aaac;"></div>
<div style="left:253px;top:143px;width:3px;height:3px;background:#efeff0;"></div>
<div style="left:253px;top:144px;width:3px;height:1px;background:#a9aaac;"></div>
<div style="left:253px;top:157px;width:3px;height:3px;background:#efeff0;"></div>
<div style="left:253px;top:158px;width:3px;height:1px;background:#a9aaac;"></div>
<div style="left:253px;top:170px;width:3px;height:3px;background:#efeff0;"></div>
<div style="left:253px;top:171px;width:3px;height:1px;background:#a9aaac;"></div>
<div style="left:253px;top:184px;width:3px;height:3px;background:#efeff0;"></div>
<div style="left:253px;top:185px;width:3px;height:1px;background:#a9aaac;"></div>
<div style="left:253px;top:198px;width:3px;height:3px;background:#efeff0;"></div>
<div style="left:253px;top:199px;width:3px;height:1px;background:#a9aaac;"></div>
<div style="left:253px;top:225px;width:3px;height:3px;background:#efeff0;"></div>
<div style="left:253px;top:226px;width:3px;height:1px;background:#a9aaac;"></div>
<div style="left:253px;top:239px;width:3px;height:3px;background:#efeff0;"></div>
<div style="left:253px;top:240px;width:3px;height:1px;background:#a9aaac;"></div>
<div style="left:253px;top:253px;width:3px;height:3px;background:#efeff0;"></div>
<div style="left:253px;top:254px;width:3px;height:1px;background:#a9aaac;"></div>
<div style="left:253px;top:266px;width:3px;height:3px;background:#efeff0;"></div>
<div style="left:253px;top:267px;width:3px;height:1px;background:#a9aaac;"></div>
<div style="left:253px;top:280px;width:3px;height:3px;background:#efeff0;"></div>
<div style="left:253px;top:281px;width:3px;height:1px;background:#a9aaac;"></div>
<div style="left:253px;top:294px;width:3px;height:3px;background:#efeff0;"></div>
<div style="left:253px;top:295px;width:3px;height:1px;background:#a9aaac;"></div>
<div style="left:256px;top:121px;width:1px;height:185px;background:#1a1b1d;"></div>
<div style="left:257px;top:121px;width:1px;height:185px;background:#b9babb;"></div>
<div style="left:193px;top:293px;width:41px;height:8px;background:linear-gradient(180deg,#111214 0%,#2a2d31 30%,#3a3e43 55%,#1a1b1e 90%);border-radius:0 1px 1px 0;"></div>
<div style="left:193px;top:294px;width:36px;height:5px;background:linear-gradient(90deg,#1b1d20 0%,#2b2e32 55%,#4d5157 100%);"></div>
<div style="left:230px;top:294px;width:3px;height:5px;background:#1fa7f3;"></div>
<div style="left:193px;top:277px;width:41px;height:8px;background:linear-gradient(180deg,#111214 0%,#2a2d31 30%,#3a3e43 55%,#1a1b1e 90%);border-radius:0 1px 1px 0;"></div>
<div style="left:193px;top:278px;width:36px;height:5px;background:linear-gradient(90deg,#1b1d20 0%,#2b2e32 55%,#4d5157 100%);"></div>
<div style="left:230px;top:278px;width:3px;height:5px;background:#1fa7f3;"></div>
<div style="left:193px;top:253px;width:41px;height:8px;background:linear-gradient(180deg,#111214 0%,#2a2d31 30%,#3a3e43 55%,#1a1b1e 90%);border-radius:0 1px 1px 0;"></div>
<div style="left:193px;top:254px;width:36px;height:5px;background:linear-gradient(90deg,#1b1d20 0%,#2b2e32 55%,#4d5157 100%);"></div>
<div style="left:230px;top:254px;width:3px;height:5px;background:#1fa7f3;"></div>
<div style="left:193px;top:237px;width:41px;height:8px;background:linear-gradient(180deg,#111214 0%,#2a2d31 30%,#3a3e43 55%,#1a1b1e 90%);border-radius:0 1px 1px 0;"></div>
<div style="left:193px;top:238px;width:36px;height:5px;background:linear-gradient(90deg,#1b1d20 0%,#2b2e32 55%,#4d5157 100%);"></div>
<div style="left:230px;top:238px;width:3px;height:5px;background:#1fa7f3;"></div>
<div style="left:193px;top:221px;width:41px;height:8px;background:linear-gradient(180deg,#111214 0%,#2a2d31 30%,#3a3e43 55%,#1a1b1e 90%);border-radius:0 1px 1px 0;"></div>
<div style="left:193px;top:222px;width:36px;height:5px;background:linear-gradient(90deg,#1b1d20 0%,#2b2e32 55%,#4d5157 100%);"></div>
<div style="left:230px;top:222px;width:3px;height:5px;background:#1fa7f3;"></div>
<div style="left:193px;top:197px;width:41px;height:8px;background:linear-gradient(180deg,#111214 0%,#2a2d31 30%,#3a3e43 55%,#1a1b1e 90%);border-radius:0 1px 1px 0;"></div>
<div style="left:193px;top:198px;width:36px;height:5px;background:linear-gradient(90deg,#1b1d20 0%,#2b2e32 55%,#4d5157 100%);"></div>
<div style="left:230px;top:198px;width:3px;height:5px;background:#1fa7f3;"></div>
<div style="left:193px;top:181px;width:41px;height:8px;background:linear-gradient(180deg,#111214 0%,#2a2d31 30%,#3a3e43 55%,#1a1b1e 90%);border-radius:0 1px 1px 0;"></div>
<div style="left:193px;top:182px;width:36px;height:5px;background:linear-gradient(90deg,#1b1d20 0%,#2b2e32 55%,#4d5157 100%);"></div>
<div style="left:230px;top:182px;width:3px;height:5px;background:#1fa7f3;"></div>
<div style="left:193px;top:157px;width:41px;height:8px;background:linear-gradient(180deg,#111214 0%,#2a2d31 30%,#3a3e43 55%,#1a1b1e 90%);border-radius:0 1px 1px 0;"></div>
<div style="left:193px;top:158px;width:36px;height:5px;background:linear-gradient(90deg,#1b1d20 0%,#2b2e32 55%,#4d5157 100%);"></div>
<div style="left:230px;top:158px;width:3px;height:5px;background:#1fa7f3;"></div>
<div style="left:193px;top:141px;width:41px;height:8px;background:linear-gradient(180deg,#111214 0%,#2a2d31 30%,#3a3e43 55%,#1a1b1e 90%);border-radius:0 1px 1px 0;"></div>
<div style="left:193px;top:142px;width:36px;height:5px;background:linear-gradient(90deg,#1b1d20 0%,#2b2e32 55%,#4d5157 100%);"></div>
<div style="left:230px;top:142px;width:3px;height:5px;background:#1fa7f3;"></div>
<div style="left:193px;top:125px;width:41px;height:8px;background:linear-gradient(180deg,#111214 0%,#2a2d31 30%,#3a3e43 55%,#1a1b1e 90%);border-radius:0 1px 1px 0;"></div>
<div style="left:193px;top:126px;width:36px;height:5px;background:linear-gradient(90deg,#1b1d20 0%,#2b2e32 55%,#4d5157 100%);"></div>
<div style="left:230px;top:126px;width:3px;height:5px;background:#1fa7f3;"></div>
<div class="t" style="left:236px;top:200px;line-height:12px;height:12px;font-size:8.6px;color:#161b2e;width:17.2px;text-align:right;-webkit-text-stroke:0.4px #161b2e;">C 2</div>
<div class="t" style="left:236px;top:296px;line-height:12px;height:12px;font-size:8.6px;color:#161b2e;width:17.2px;text-align:right;-webkit-text-stroke:0.4px #161b2e;">C 1</div>
<div style="left:192px;top:119px;width:1px;height:188px;background:#0c0d0e;"></div>
<div style="left:193px;top:306px;width:1706px;height:1px;background:#0a0b0c;"></div>
<div style="left:193px;top:307px;width:64px;height:16px;background:#2b2d31;"></div>
<div style="left:257px;top:307px;width:1659px;height:16px;background:#2b2d31;"></div>
<div class="t" style="left:262px;top:308px;line-height:14px;height:14px;font-size:10.5px;color:#d6d7d9;">...</div>
<div style="left:276px;top:307px;width:60px;height:16px;background:#3a91c9;"></div>
<div class="t" style="left:276px;top:308px;line-height:14px;height:14px;font-size:10.5px;color:#fff;width:60px;text-align:center;">Velocity</div>
<div style="left:337px;top:307px;width:75px;height:16px;background:#303237;"></div>
<div class="t" style="left:337px;top:308px;line-height:14px;height:14px;font-size:10.5px;color:#d2d3d5;width:75px;text-align:center;">Modulation</div>
<div style="left:413px;top:307px;width:74px;height:16px;background:#303237;"></div>
<div class="t" style="left:413px;top:308px;line-height:14px;height:14px;font-size:10.5px;color:#d2d3d5;width:74px;text-align:center;">Pitch Bend</div>
<div style="left:488px;top:307px;width:78px;height:16px;background:#303237;"></div>
<div class="t" style="left:488px;top:308px;line-height:14px;height:14px;font-size:10.5px;color:#d2d3d5;width:78px;text-align:center;">After Touch</div>
<svg style="left:1902px;top:311px;" width="9" height="9" viewBox="0 0 9 9"><path d="M1.6 1.6 L7.4 7.4 M7.4 1.6 L1.6 7.4" stroke="#c6c7c9" stroke-width="1.7"/></svg>
<div style="left:380px;top:323px;width:1px;height:159px;background:#060607;"></div>
<div style="left:1487px;top:323px;width:1px;height:159px;background:#060607;"></div>
<div style="left:380px;top:323px;width:1108px;height:1px;background:#060607;"></div>
<div style="left:380px;top:481px;width:1108px;height:1px;background:#060607;"></div>
<div style="left:193px;top:323px;width:64px;height:159px;background:#292b2f;border:1px solid #0a0b0c;border-right:none;"></div>
<div style="left:257px;top:323px;width:1px;height:159px;background:#cfcfcf;"></div>
<div class="t" style="left:200px;top:324px;line-height:12px;height:12px;font-size:9.2px;color:#d6d7d9;width:46px;text-align:right;">100.00</div>
<div class="t" style="left:200px;top:397px;line-height:12px;height:12px;font-size:9.2px;color:#d6d7d9;width:46px;text-align:right;">50.00</div>
<div class="t" style="left:200px;top:469px;line-height:12px;height:12px;font-size:9.2px;color:#d6d7d9;width:46px;text-align:right;">0.00</div>
<div style="left:253px;top:342px;width:4px;height:1px;background:#c9c9c9;"></div>
<div style="left:253px;top:362px;width:4px;height:1px;background:#c9c9c9;"></div>
<div style="left:253px;top:382px;width:4px;height:1px;background:#c9c9c9;"></div>
<div style="left:250px;top:402px;width:7px;height:1px;background:#c9c9c9;"></div>
<div style="left:253px;top:421px;width:4px;height:1px;background:#c9c9c9;"></div>
<div style="left:253px;top:441px;width:4px;height:1px;background:#c9c9c9;"></div>
<div style="left:253px;top:461px;width:4px;height:1px;background:#c9c9c9;"></div>
<div style="left:503px;top:323px;width:3px;height:159px;background:#f2f2f2;"></div>
<div style="left:626px;top:323px;width:3px;height:159px;background:#f2f2f2;"></div>
<div style="left:749px;top:323px;width:3px;height:159px;background:#5b8fd8;"></div>
<div style="left:872px;top:323px;width:3px;height:159px;background:#5b8fd8;"></div>
<div style="left:193px;top:482px;width:1723px;height:17px;background:#26272b;"></div>
<svg style="left:195px;top:485px;" width="17" height="12" viewBox="0 0 17 12"><path d="M1.4 10.4 L5.6 5.4 L8.6 7.6 L12 2.6 L15.2 5" fill="none" stroke="#ededed" stroke-width="1.5" stroke-linejoin="round"/></svg>
<svg style="left:219px;top:485px;" width="10" height="10" viewBox="0 0 10 10"><path d="M1 5.2 L9.4 5.2 M5.2 1 L5.2 9.4" stroke="#d9d9d9" stroke-width="1.7"/></svg>
<svg style="left:240px;top:485px;" width="10" height="10" viewBox="0 0 10 10"><path d="M0.8 5.2 L9 5.2" stroke="#d9d9d9" stroke-width="1.7"/></svg>
<svg style="left:262px;top:485px;" width="8" height="10" viewBox="0 0 8 10"><path d="M7 1 L7 9.4 L1 5.2 Z" fill="#6d6f73"/></svg>
<div style="left:281px;top:488px;width:52px;height:5px;background:#6f7175;"></div>
<svg style="left:1756px;top:485px;" width="9" height="11" viewBox="0 0 9 11"><path d="M1.4 1 L1.4 10 L7.6 5.5 Z" fill="#7b7d81"/></svg>
<svg style="left:1774px;top:485px;" width="12" height="10" viewBox="0 0 12 10"><path d="M0.8 8.6 L11 8.6 L5.9 2.6 Z" fill="#7b7d81"/></svg>
<div style="left:1788px;top:490px;width:67px;height:1px;background:#86888c;"></div>
<div style="left:1806px;top:485px;width:3px;height:11px;background:#86888c;"></div>
<svg style="left:1858px;top:483px;" width="18" height="13" viewBox="0 0 18 13"><path d="M0.8 11.4 L17 11.4 L8.9 1.6 Z" fill="#7b7d81"/></svg>
<svg style="left:1880px;top:484px;" width="14" height="13" viewBox="0 0 14 13"><rect x="6" y="0.6" width="7" height="2.2" fill="#6d6f73"/><rect x="6" y="4" width="7" height="2.2" fill="#6d6f73"/><rect x="0.6" y="7.4" width="4" height="1.8" fill="#6d6f73"/><rect x="0.6" y="10.4" width="4" height="1.8" fill="#6d6f73"/></svg>
<div style="left:0px;top:502px;width:1919px;height:1px;background:#060606;"></div>
<div style="left:0px;top:503px;width:1919px;height:45px;background:#5e636c;"></div>
<div style="left:0px;top:548px;width:1919px;height:4px;background:linear-gradient(180deg,#565a62,#34373b);"></div>
<div style="left:0px;top:552px;width:1919px;height:4px;background:#0d0f0e;"></div>
<svg style="left:170px;top:502px;" width="1402" height="50" viewBox="0 0 1402 50"><defs><linearGradient id="bev" x1="0" y1="0" x2="0" y2="1"><stop offset="0" stop-color="#595c61"/><stop offset="1" stop-color="#323437"/></linearGradient></defs><path d="M13.8 43 L1388.2 43 L1387 50 L15 50 Z" fill="url(#bev)"/><path d="M13.6 42 L1388.4 42 L1388.2 43 L13.8 43 Z" fill="#7e8084"/><path d="M5 0 L1397 0 L1388 42 L14 42 Z" fill="#131313"/></svg>
<svg style="left:189px;top:508px;" width="30" height="18" viewBox="0 0 30 18"><path d="M1.6 4.4 L1.6 13.6 L6 9 Z" fill="#48525c"/><path d="M25.2 4.4 L25.2 13.6 L29.6 9 Z" fill="#48525c"/><circle cx="14.8" cy="9" r="6.4" fill="none" stroke="#55606a" stroke-width="1.1"/><circle cx="18.90" cy="9.00" r="0.85" fill="#55606a"/><circle cx="17.70" cy="6.10" r="0.85" fill="#55606a"/><circle cx="14.80" cy="4.90" r="0.85" fill="#55606a"/><circle cx="11.90" cy="6.10" r="0.85" fill="#55606a"/><circle cx="10.70" cy="9.00" r="0.85" fill="#55606a"/><rect x="14" y="12.2" width="1.6" height="1.8" fill="#55606a"/></svg>
<div class="t" style="left:189px;top:526px;line-height:14px;height:14px;font-size:10.6px;color:#c6c7c9;width:30px;text-align:center;">MIDI</div>
<div style="left:228px;top:511px;width:60px;height:5px;background:#3b3e43;"></div>
<div style="left:288px;top:511px;width:5px;height:5px;background:#2a2c2f;"></div>
<div style="left:228px;top:518px;width:60px;height:5px;background:#3b3e43;"></div>
<div style="left:288px;top:518px;width:5px;height:5px;background:#2a2c2f;"></div>
<div style="left:228px;top:511px;width:2px;height:5px;background:#4db5f0;"></div>
<div class="t" style="left:231px;top:527px;line-height:14px;height:14px;font-size:10.8px;color:#c6c7c9;">Performance</div>
<svg style="left:309.4px;top:512.5px;" width="24" height="24" viewBox="0 0 24 24"><circle cx="22.20" cy="12.00" r="1.35" fill="#bfc0c2"/><circle cx="20.83" cy="17.10" r="1.35" fill="#bfc0c2"/><circle cx="17.10" cy="20.83" r="1.35" fill="#bfc0c2"/><circle cx="12.00" cy="22.20" r="1.35" fill="#bfc0c2"/><circle cx="6.90" cy="20.83" r="1.35" fill="#bfc0c2"/><circle cx="3.17" cy="17.10" r="1.35" fill="#bfc0c2"/><circle cx="1.80" cy="12.00" r="1.35" fill="#bfc0c2"/><circle cx="3.17" cy="6.90" r="1.35" fill="#bfc0c2"/><circle cx="6.90" cy="3.17" r="1.35" fill="#bfc0c2"/><circle cx="12.00" cy="1.80" r="1.35" fill="#bfc0c2"/><circle cx="17.10" cy="3.17" r="1.35" fill="#bfc0c2"/><circle cx="20.83" cy="6.90" r="1.35" fill="#bfc0c2"/></svg>
<div class="t" style="left:347px;top:509px;line-height:17px;height:17px;font-size:13px;color:#e9e9e9;">44.1 kHz</div>
<div class="t" style="left:347px;top:526px;line-height:14px;height:14px;font-size:11px;color:#e9e9e9;">0.0 ms</div>
<div class="t" style="left:415.5px;top:509px;line-height:17px;height:17px;font-size:13px;color:#e9e9e9;">14:08 days</div>
<div class="t" style="left:415.5px;top:526px;line-height:14px;height:14px;font-size:10.7px;color:#c6c7c9;">Record Max</div>
<div class="t" style="left:494px;top:509px;line-height:17px;height:17px;font-size:13.6px;color:#e9e9e9;width:101px;text-align:center;letter-spacing:0.2px;">00:00:00.000</div>
<div class="t" style="left:490px;top:526px;line-height:14px;height:14px;font-size:11px;color:#c6c7c9;width:100px;text-align:center;">Seconds</div>
<div class="t" style="left:600px;top:508px;line-height:22px;height:22px;font-size:18px;color:#efefef;width:160px;text-align:center;font-weight:bold;word-spacing:-1px;">00001 .01 .01 .00</div>
<div class="t" style="left:623px;top:526px;line-height:14px;height:14px;font-size:11px;color:#c6c7c9;width:100px;text-align:center;">Bars</div>
<svg style="left:760px;top:506px;" width="290" height="36" viewBox="760 506 290 36"><path d="M777 517.2 L777 528.8 L766.3 523 Z" fill="#c4c5c6"/><path d="M798.5 517.2 L798.5 528.8 L788.2 523 Z" fill="#c4c5c6"/><path d="M806.3 517.2 L806.3 528.8 L796 523 Z" fill="#c4c5c6"/><path d="M819.7 517.2 L819.7 528.8 L830 523 Z" fill="#c4c5c6"/><path d="M827.3 517.2 L827.3 528.8 L837.6 523 Z" fill="#c4c5c6"/><path d="M845.9 517.2 L845.9 528.8 L856.6 523 Z" fill="#c4c5c6"/><rect x="870.3" y="517.2" width="1.6" height="11.6" fill="#c4c5c6"/><path d="M883 517.2 L883 528.8 L872.3 523 Z" fill="#c4c5c6"/><rect x="904" y="513" width="20" height="20" fill="#21b2dd"/><path d="M943 513 L943 533 L959.8 523 Z" fill="#d2d3d4"/><circle cx="985" cy="523" r="10.1" fill="#d2d3d4"/><path d="M1021 531.4 L1017.4 531.4 Q1011.2 531.4 1011.2 522.8 Q1011.2 514.2 1017.4 514.2 L1034.6 514.2 Q1040.8 514.2 1040.8 522.8 Q1040.8 531.4 1034.6 531.4 L1029.4 531.4 L1032.6 522.6 M1021 531.4 L1024.4 522.6" fill="none" stroke="#9b9c9e" stroke-width="1.9" stroke-linejoin="round"/></svg>
<div class="t" style="left:1061.3px;top:508px;line-height:16px;height:16px;font-size:12px;color:#6fa6cf;font-weight:bold;">L</div>
<div class="t" style="left:1060.6px;top:524px;line-height:16px;height:16px;font-size:12px;color:#6fa6cf;font-weight:bold;">R</div>
<div class="t" style="left:1079px;top:508px;line-height:17px;height:17px;font-size:13px;color:#e9e9e9;word-spacing:-1.4px;">00001 .01 .01 .00</div>
<div class="t" style="left:1079px;top:523px;line-height:17px;height:17px;font-size:13px;color:#e9e9e9;word-spacing:-1.4px;">00001 .01 .01 .00</div>
<svg style="left:1186px;top:510px;" width="50" height="30" viewBox="0 0 50 30"><path d="M3 3.35 L7 3.35 L12 7.3 L18.8 7.3" fill="none" stroke="#a3a4a6" stroke-width="0.8"/><path d="M3 7.3 L8.6 7.3" stroke="#a3a4a6" stroke-width="0.8" stroke-dasharray="2 1.4"/><rect x="30" y="1.9" width="1.1" height="7.9" fill="#a3a4a6"/><rect x="32.1" y="5.8" width="0.8" height="0.8" fill="#a3a4a6"/><rect x="33.9" y="5.8" width="0.8" height="0.8" fill="#a3a4a6"/><rect x="36.1" y="1.9" width="1.1" height="7.9" fill="#a3a4a6"/><rect x="37.2" y="4.1" width="6.8" height="4.3" fill="#a3a4a6"/><path d="M14.1 27.1 L8.9 22.3" stroke="#a3a4a6" stroke-width="1.7" stroke-linecap="round"/><path d="M6.52 18.13 A2.2 2.2 0 1 1 4.73 19.92" fill="none" stroke="#a3a4a6" stroke-width="1.5"/><rect x="28.1" y="23.1" width="0.8" height="0.8" fill="#a3a4a6"/><rect x="29.9" y="23.1" width="0.8" height="0.8" fill="#a3a4a6"/><rect x="31.8" y="19.2" width="1.4" height="7.9" fill="#a3a4a6"/><rect x="33.2" y="21" width="6.8" height="4.7" fill="#a3a4a6"/><rect x="40" y="19.2" width="1.2" height="7.9" fill="#a3a4a6"/><rect x="42.5" y="23.1" width="0.8" height="0.8" fill="#a3a4a6"/><rect x="44.3" y="23.1" width="0.8" height="0.8" fill="#a3a4a6"/></svg>
<svg style="left:1243px;top:509px;" width="58" height="16" viewBox="0 0 58 16"><circle cx="7.5" cy="7.6" r="4.7" fill="#7c8484"/><path d="M31.6 12.3 L26.8 8.2" stroke="#a3a4a6" stroke-width="1.7" stroke-linecap="round"/><path d="M24.52 4.33 A2.2 2.2 0 1 1 22.73 6.12" fill="none" stroke="#a3a4a6" stroke-width="1.5"/><path d="M42.8 13 L48.5 2.9 L54.3 13 Z" fill="#a3a4a6"/><path d="M44 4.6 L46 6.8" stroke="#a3a4a6" stroke-width="1"/><path d="M46 6.8 L49.4 10.6" stroke="#6d6e70" stroke-width="1"/><circle cx="48.4" cy="9.4" r="0.9" fill="none" stroke="#6d6e70" stroke-width="0.6"/></svg>
<div class="t" style="left:1243.5px;top:526px;line-height:14px;height:14px;font-size:10.7px;color:#c6c7c9;">Metronome</div>
<div class="t" style="left:1296px;top:509px;line-height:17px;height:17px;font-size:13px;color:#e9e9e9;width:70px;text-align:center;">4 / 4</div>
<div class="t" style="left:1297px;top:526px;line-height:14px;height:14px;font-size:10.7px;color:#c6c7c9;width:70px;text-align:center;">Timing</div>
<div class="t" style="left:1342px;top:509px;line-height:17px;height:17px;font-size:13px;color:#e9e9e9;width:70px;text-align:center;">-</div>
<div class="t" style="left:1342px;top:526px;line-height:14px;height:14px;font-size:10.7px;color:#c6c7c9;width:70px;text-align:center;">Key</div>
<div class="t" style="left:1389px;top:509px;line-height:17px;height:17px;font-size:13px;color:#e9e9e9;width:70px;text-align:center;">150.00</div>
<div class="t" style="left:1389px;top:526px;line-height:14px;height:14px;font-size:10.7px;color:#c6c7c9;width:70px;text-align:center;">Tempo</div>
<div style="left:1461px;top:511px;width:67px;height:4px;background:#3b3e43;"></div>
<div style="left:1528px;top:511px;width:23px;height:4px;background:#1c1d1f;"></div>
<div style="left:1461px;top:516px;width:67px;height:4px;background:#3b3e43;"></div>
<div style="left:1528px;top:516px;width:23px;height:4px;background:#1c1d1f;"></div>
<svg style="left:1461px;top:528px;" width="68" height="9" viewBox="0 0 68 9"><rect x="0" y="0" width="1" height="9" fill="#3e9fd6"/><rect x="2" y="0" width="1" height="9" fill="#3e9fd6"/><rect x="4" y="0" width="1" height="9" fill="#3e9fd6"/><rect x="6" y="0" width="1" height="9" fill="#3e9fd6"/><rect x="8" y="0" width="1" height="9" fill="#3e9fd6"/><rect x="10" y="0" width="1" height="9" fill="#3e9fd6"/><rect x="12" y="0" width="1" height="9" fill="#3e9fd6"/><rect x="14" y="0" width="1" height="9" fill="#3e9fd6"/><rect x="16" y="0" width="1" height="9" fill="#3e9fd6"/><rect x="18" y="0" width="1" height="9" fill="#3e9fd6"/><rect x="20" y="0" width="1" height="9" fill="#3e9fd6"/><rect x="22" y="0" width="1" height="9" fill="#3e9fd6"/><rect x="24" y="0" width="1" height="9" fill="#3e9fd6"/><rect x="26" y="0" width="1" height="9" fill="#3e9fd6"/><rect x="28" y="0" width="1" height="9" fill="#3e9fd6"/><rect x="30" y="0" width="1" height="9" fill="#3e9fd6"/><rect x="32" y="0" width="1" height="9" fill="#3e9fd6"/><rect x="34" y="0" width="1" height="9" fill="#3e9fd6"/><rect x="36" y="0" width="1" height="9" fill="#3e9fd6"/><rect x="38" y="0" width="1" height="9" fill="#3e9fd6"/><rect x="40" y="0" width="1" height="9" fill="#3e9fd6"/><rect x="42" y="0" width="1" height="9" fill="#3e9fd6"/><rect x="44" y="0" width="1" height="9" fill="#3e9fd6"/><rect x="46" y="0" width="1" height="9" fill="#3e9fd6"/><rect x="48" y="0" width="1" height="9" fill="#3e9fd6"/><rect x="50" y="0" width="1" height="9" fill="#4a4d52"/><rect x="52" y="0" width="1" height="9" fill="#4a4d52"/><rect x="54" y="0" width="1" height="9" fill="#4a4d52"/><rect x="56" y="0" width="1" height="9" fill="#4a4d52"/><rect x="58" y="0" width="1" height="9" fill="#4a4d52"/><rect x="60" y="0" width="1" height="9" fill="#4a4d52"/><rect x="62" y="0" width="1" height="9" fill="#4a4d52"/><rect x="64" y="0" width="1" height="9" fill="#4a4d52"/><rect x="66" y="0" width="1" height="9" fill="#4a4d52"/><rect x="49" y="0" width="2" height="9" fill="#9fd3f2"/></svg>
<svg style="left:1534px;top:527px;" width="18" height="11" viewBox="0 0 18 11"><rect x="0.6" y="0.8" width="16.6" height="9.4" rx="4.7" fill="#3fb0e6"/><circle cx="12.2" cy="5.5" r="3.4" fill="#10181d"/><circle cx="12.2" cy="5.5" r="1.9" fill="#7cc4ea"/></svg>
<div style="left:1742px;top:503px;width:56px;height:45px;background:#2b95d6;"></div>
<div style="left:1742px;top:548px;width:56px;height:4px;background:linear-gradient(180deg,#2379ae,#174e70);"></div>
<div style="left:1741px;top:503px;width:1px;height:49px;background:#4b4f56;"></div>
<div style="left:1797px;top:503px;width:1px;height:49px;background:#4b4f56;"></div>
<div style="left:1853px;top:503px;width:1px;height:49px;background:#4b4f56;"></div>
<div class="t" style="left:1742px;top:519px;line-height:17px;height:17px;font-size:13px;color:#fff;width:55px;text-align:center;">Edit</div>
<div class="t" style="left:1798px;top:519px;line-height:17px;height:17px;font-size:13px;color:#e3e4e6;width:55px;text-align:center;">Mix</div>
<div class="t" style="left:1854px;top:519px;line-height:17px;height:17px;font-size:13px;color:#e3e4e6;width:65px;text-align:center;">Browse</div>
</div></body></html>
